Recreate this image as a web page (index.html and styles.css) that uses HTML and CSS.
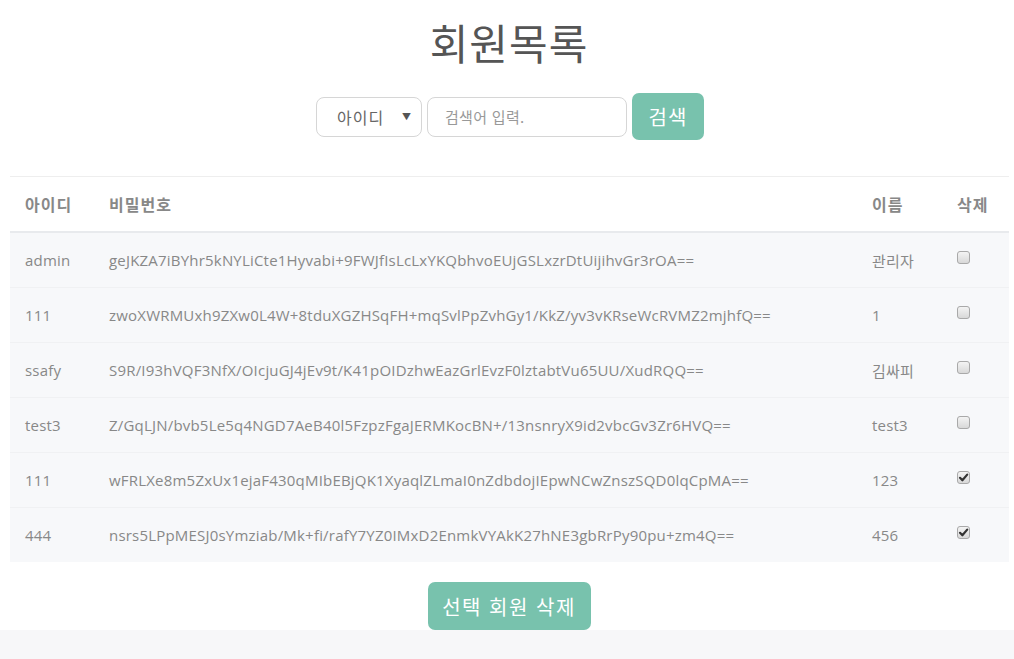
FILE: index.html
```html
<!DOCTYPE html>
<html lang="ko">
<head>
<meta charset="utf-8">
<title>회원목록</title>
<link rel="stylesheet" href="styles.css">
</head>
<body>
<div class="page">
  <h1 class="title">회원목록</h1>
  <form class="search">
    <div class="select"><span>아이디</span><span class="caret">▼</span></div>
    <div class="input">검색어 입력.</div>
    <button type="button" class="btn btn-search">검색</button>
  </form>
  <table class="members">
    <thead>
      <tr><th class="c-id">아이디</th><th class="c-pw">비밀번호</th><th class="c-name">이름</th><th class="c-del">삭제</th></tr>
    </thead>
    <tbody>
      <tr><td>admin</td><td>geJKZA7iBYhr5kNYLiCte1Hyvabi+9FWJfIsLcLxYKQbhvoEUjGSLxzrDtUijihvGr3rOA==</td><td>관리자</td><td><span class="chk"></span></td></tr>
      <tr><td>111</td><td>zwoXWRMUxh9ZXw0L4W+8tduXGZHSqFH+mqSvlPpZvhGy1/KkZ/yv3vKRseWcRVMZ2mjhfQ==</td><td>1</td><td><span class="chk"></span></td></tr>
      <tr><td>ssafy</td><td>S9R/I93hVQF3NfX/OIcjuGJ4jEv9t/K41pOIDzhwEazGrlEvzF0lztabtVu65UU/XudRQQ==</td><td>김싸피</td><td><span class="chk"></span></td></tr>
      <tr><td>test3</td><td>Z/GqLJN/bvb5Le5q4NGD7AeB40l5FzpzFgaJERMKocBN+/13nsnryX9id2vbcGv3Zr6HVQ==</td><td>test3</td><td><span class="chk"></span></td></tr>
      <tr><td>111</td><td>wFRLXe8m5ZxUx1ejaF430qMIbEBjQK1XyaqlZLmaI0nZdbdojIEpwNCwZnszSQD0lqCpMA==</td><td>123</td><td><span class="chk on"><svg viewBox="0 0 13 13" width="13" height="13"><path d="M3 6.8 L5.4 9.3 L10.2 3.6" fill="none" stroke="#333" stroke-width="2.2" stroke-linecap="round" stroke-linejoin="round"/></svg></span></td></tr>
      <tr><td>444</td><td>nsrs5LPpMESJ0sYmziab/Mk+fi/rafY7YZ0IMxD2EnmkVYAkK27hNE3gbRrPy90pu+zm4Q==</td><td>456</td><td><span class="chk on"><svg viewBox="0 0 13 13" width="13" height="13"><path d="M3 6.8 L5.4 9.3 L10.2 3.6" fill="none" stroke="#333" stroke-width="2.2" stroke-linecap="round" stroke-linejoin="round"/></svg></span></td></tr>
    </tbody>
  </table>
  <div class="actions">
    <button type="button" class="btn btn-delete">선택 회원 삭제</button>
  </div>
</div>
</body>
</html>
```

FILE: styles.css
```css
html, body {
  margin: 0;
  padding: 0;
}
body {
  background: #f7f7f9;
  font-family: "Open Sans", "Noto Sans CJK KR", sans-serif;
  color: #888;
}
.page {
  background: #fff;
  display: flex;
  flex-direction: column;
  align-items: center;
}
.title {
  margin: 0;
  padding-top: 18px;
  font-family: "Noto Sans CJK KR", sans-serif;
  font-size: 42px;
  line-height: 48px;
  font-weight: 400;
  letter-spacing: 1px;
  color: #555;
  padding-left: 4px;
}
.search {
  margin-top: 27px;
  display: flex;
  align-items: center;
  gap: 5px;
  padding-left: 6px;
}
.select {
  box-sizing: border-box;
  width: 106px;
  height: 40px;
  border: 1px solid #d6d6d6;
  border-radius: 8px;
  display: flex;
  align-items: center;
  justify-content: space-between;
  padding: 0 9px 0 20px;
  font-family: "Noto Sans CJK KR", sans-serif;
  font-size: 16px;
  letter-spacing: 1px;
  color: #666;
}
.caret {
  font-size: 9px;
  color: #555;
}
.input {
  box-sizing: border-box;
  width: 200px;
  height: 40px;
  border: 1px solid #d6d6d6;
  border-radius: 8px;
  display: flex;
  align-items: center;
  padding-left: 17px;
  font-family: "Noto Sans CJK KR", sans-serif;
  font-size: 15px;
  letter-spacing: 0.3px;
  color: #999;
}
.btn {
  border: none;
  background: #78c2ad;
  color: #fff;
  font-family: "Noto Sans CJK KR", sans-serif;
  font-size: 20px;
  border-radius: 7px;
  padding: 0;
  cursor: pointer;
}
.btn-search {
  width: 72px;
  height: 47px;
  letter-spacing: 1px;
}
.members {
  margin-top: 36px;
  align-self: stretch;
  margin-left: 10px;
  margin-right: 5px;
  border-collapse: collapse;
  font-size: 15px;
  table-layout: fixed;
}
.members thead tr {
  border-top: 1px solid #eeeeee;
  border-bottom: 2px solid #e8eaed;
}
.members th {
  height: 54px;
  text-align: left;
  padding: 0 15px;
  font-family: "Noto Sans CJK KR", sans-serif;
  font-size: 16px;
  font-weight: 700;
  letter-spacing: 1px;
  color: #888;
}
.c-id { width: 54px; }
.c-name { width: 55px; }
.c-del { width: 37px; }
.members tbody tr {
  background: #f7f8fa;
  border-top: 1px solid #f0f1f3;
}
.members tbody tr:first-child {
  border-top: none;
}
.members td {
  height: 54px;
  padding: 0 15px;
  white-space: nowrap;
  font-family: "Open Sans", "Noto Sans CJK KR", sans-serif;
  letter-spacing: 0.2px;
  color: #888;
}
.chk {
  display: inline-block;
  box-sizing: border-box;
  width: 13px;
  height: 13px;
  border: 1px solid #a9a9a9;
  border-radius: 3px;
  background: linear-gradient(#f4f4f4, #d8d8d8);
  position: relative;
  top: -4px;
  vertical-align: middle;
}
.chk svg {
  position: absolute;
  left: -1px;
  top: -1px;
}
.actions {
  margin-top: 20px;
  display: flex;
  justify-content: center;
}
.btn-delete {
  width: 163px;
  height: 48px;
  margin-left: 4px;
  letter-spacing: 1.5px;
}
```
